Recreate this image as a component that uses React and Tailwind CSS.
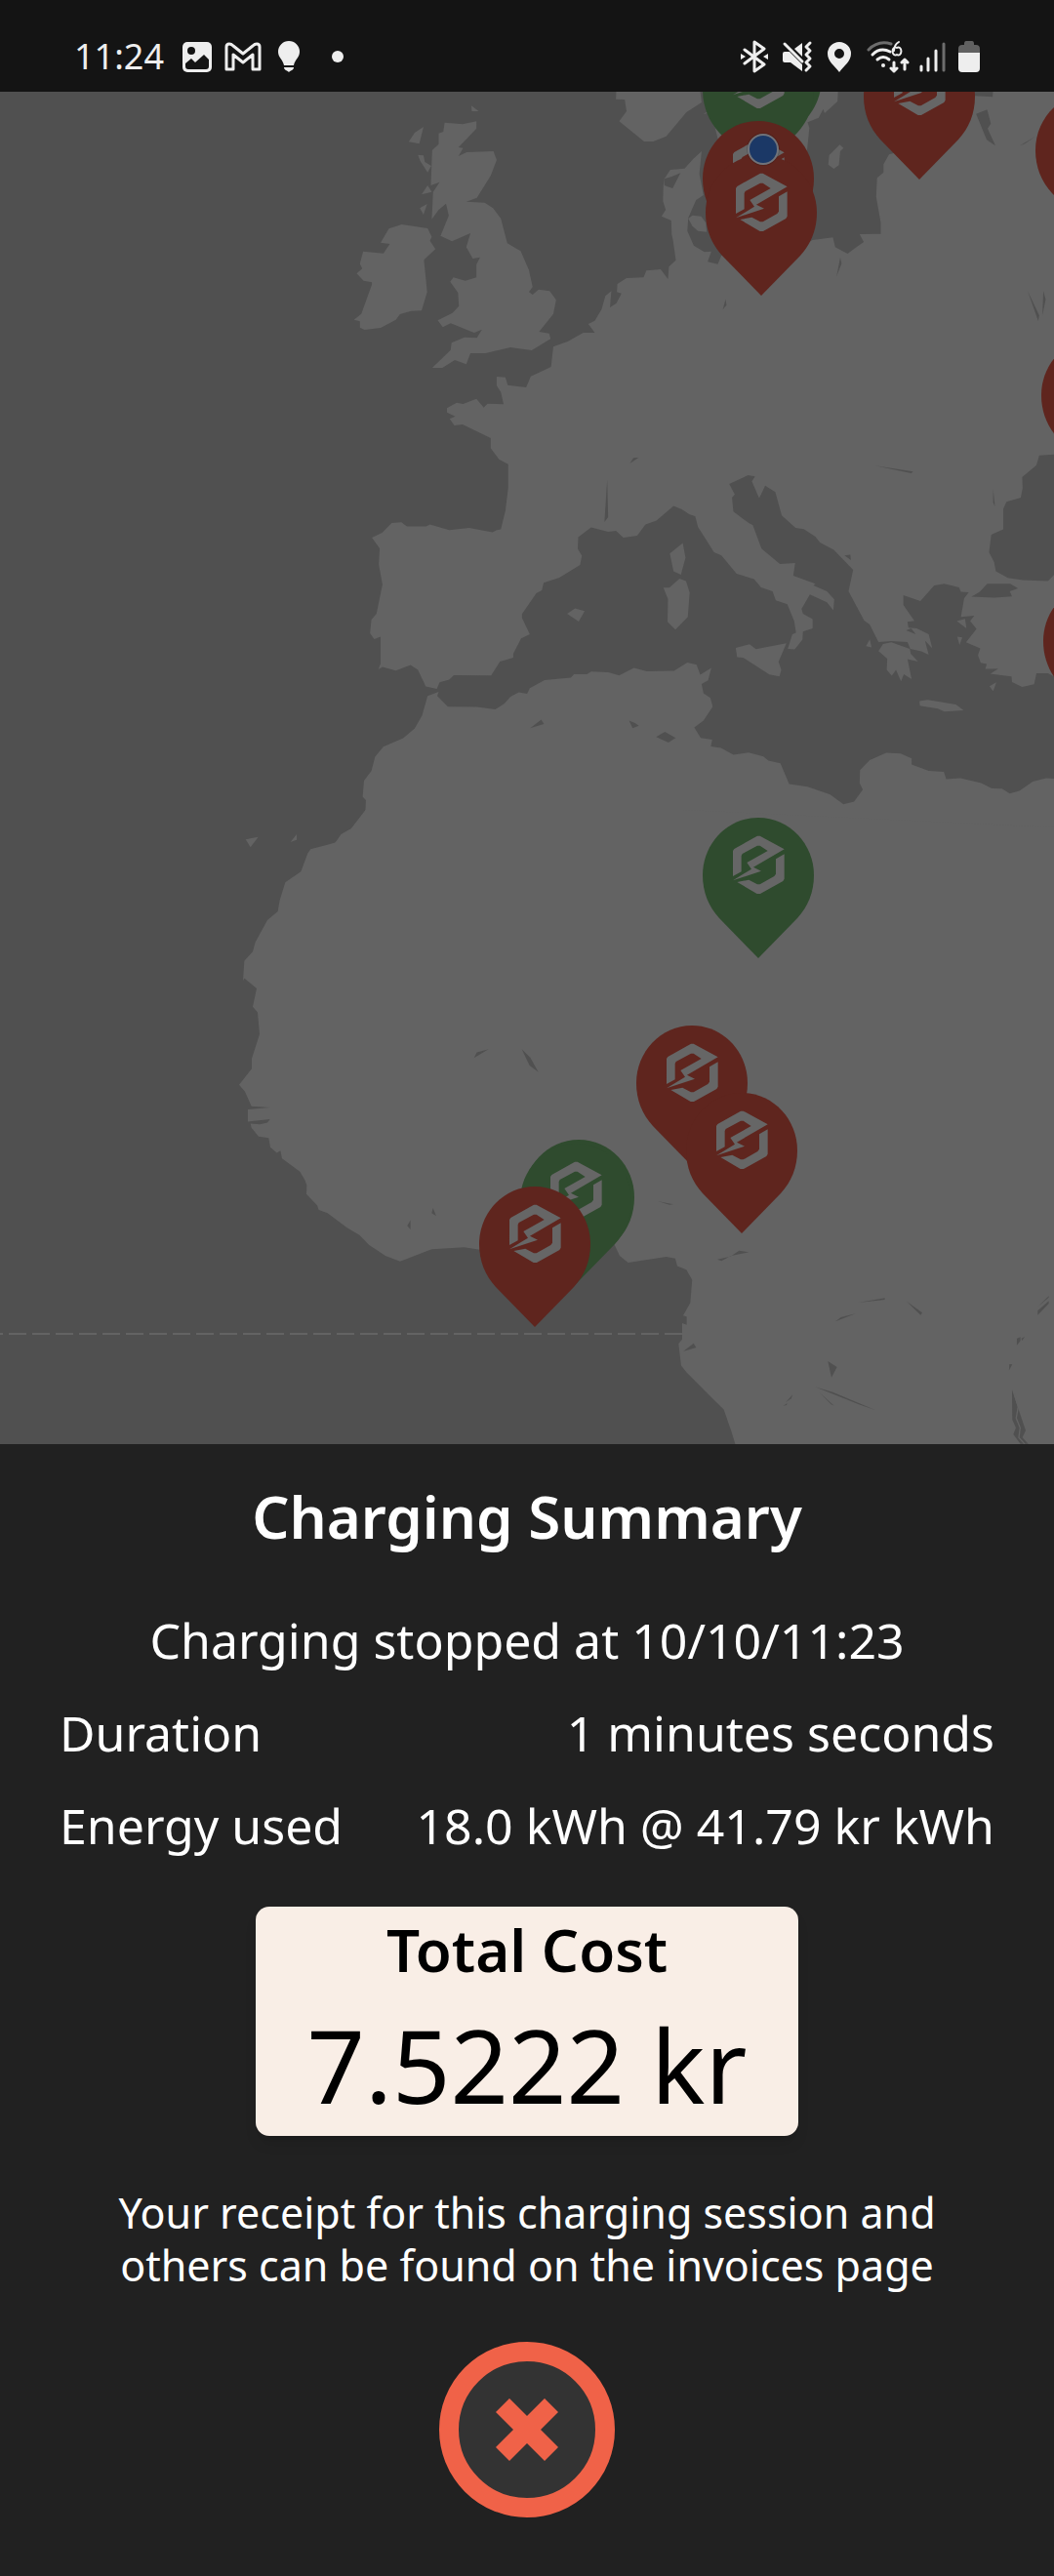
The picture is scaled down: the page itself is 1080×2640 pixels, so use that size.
import React from "react";

const SEA = "#505050";
const LAND = "#636363";
const RED = "#5f251e";
const GREEN = "#2f4b2e";

/* Land masses of Europe and the Mediterranean islands */
const europe = [
  // mainland
  "803,195 785,218 766,248 735,252 722,280 720,300 719,348 725,375 716,395 737,408 738,450 741,470 747,530 732,550 730,588 714,558 683,562 677,583 640,585 620,603 619,628 629,632 618,662 604,675 607,625 594,640 586,680 571,716 557,726 571,753 546,753 512,780 481,796 476,858 432,887 422,921 382,914 377,890 358,888 358,916 367,935 373,973 338,971 330,983 314,956 285,972 271,968 250,985 250,998 268,1010 256,1018 266,1038 284,1035 345,1077 345,1108 363,1142 383,1157 383,1230 377,1300 367,1358 358,1360 349,1367 298,1353 255,1360 213,1343 205,1349 163,1349 151,1336 130,1338 109,1368 87,1383 104,1416 102,1466 110,1527 97,1617 86,1635 83,1677 92,1695 106,1688 106,1770 101,1788 110,1781 139,1792 171,1775 187,1790 204,1841 228,1848 234,1828 255,1820 265,1806 346,1807 365,1764 394,1752 394,1740 411,1693 430,1680 422,1657 413,1630 413,1618 444,1554 456,1545 460,1522 494,1506 539,1467 543,1439 534,1418 535,1382 563,1352 600,1365 617,1362 633,1383 663,1377 681,1343 705,1331 742,1286 760,1296 777,1312 789,1317 795,1350 830,1428 846,1438 879,1494 917,1511 932,1536 957,1548 964,1576 989,1588 1004,1640 1008,1676 1000,1680 990,1725 1005,1727 1022,1697 1023,1672 1044,1662 1044,1634 1023,1617 1020,1602 1038,1558 1075,1582 1089,1607 1091,1573 1075,1548 1046,1530 1050,1525 1002,1500 1006,1461 973,1464 933,1417 914,1344 907,1340 872,1303 869,1260 875,1250 863,1218 904,1191 919,1195 912,1210 928,1262 941,1223 963,1243 977,1315 1007,1353 1025,1357 1050,1380 1060,1398 1090,1421 1132,1482 1122,1548 1156,1638 1168,1650 1187,1704 1215,1701 1250,1704 1256,1725 1280,1733 1296,1743 1288,1700 1304,1724 1296,1680 1270,1662 1252,1660 1250,1642 1265,1639 1241,1590 1241,1560 1278,1578 1308,1530 1330,1525 1362,1536 1366,1550 1383,1551 1373,1570 1366,1627 1395,1623 1386,1640 1400,1664 1377,1705 1408,1724 1403,1745 1409,1768 1422,1772 1419,1787 1447,1786 1430,1802 1476,1810 1477,1827 1499,1842 1525,1834 1530,1800 1555,1800 1568,1810 1600,1810 1600,-10 1436,-10 1435,28 1396,25 1300,100 1222,200 1210,205 1198,235 1198,260 1184,277 1182,335 1192,415 1192,449 1146,450 1155,474 1134,495 1120,510 1093,490 1088,460 1044,468 1000,500 846,515 838,542 816,535 824,503 809,505 786,485 772,440 774,400 791,345 807,330 798,265",
  // Scandinavia
  "618,-10 617,35 636,36 640,72 624,103 678,165 698,165 726,149 770,75 803,45 798,-10",
  "806,82 830,60 830,-10 1100,-10 1098,42 1070,78 1067,65 1057,92 1033,106 1037,124 1032,190 1000,300 850,250 838,155 832,122 815,78",
  "1103,175 1111,185 1104,195 1101,238 1090,249 1078,236 1080,207",
  "774,402 783,392 802,395 812,415 814,443 795,440 783,425",
  // Great Britain
  "245,107 284,112 314,103 314,125 275,183 285,185 275,210 293,198 351,195 358,222 345,270 315,338 292,350 332,353 350,370 367,402 381,478 410,502 428,560 436,612 428,628 436,636 449,620 473,625 487,652 481,695 450,750 472,755 475,772 434,807 388,798 334,816 301,816 292,850 267,837 240,861 218,861 258,806 260,784 288,767 315,769 326,743 309,753 258,724 241,736 230,715 262,692 276,671 274,630 257,596 264,583 290,593 314,583 314,543 322,521 306,525 292,490 301,447 261,472 236,455 254,393 248,356 232,375 217,404 220,320 234,290 215,300 218,192 232,173 232,140 242,135",
  // Ireland
  "152,420 208,432 217,458 213,470 225,496 200,529 207,628 195,685 172,686 148,696 139,713 106,738 71,744 61,737 61,718 48,713 64,695 87,605 87,598 69,593 54,571 66,556 61,541 68,503 112,509 126,480 106,476 124,433",
  // Scottish isles
  "199,120 190,172 167,166 180,138",
  "303,55 319,72 304,72",
  "187,206 199,208 202,228 216,240 208,260 192,225",
  "208,300 217,320 195,328",
  "207,357 199,390 191,370",
  // Corsica, Sardinia, Mallorca, Sicily
  "762,1400 768,1445 758,1497 742,1487 734,1432",
  "755,1509 769,1517 777,1552 773,1627 746,1666 729,1642 730,1572 720,1537 733,1537",
  "528,1601 549,1609 536,1641 511,1617",
  "877,1722 907,1711 921,1726 987,1708 970,1765 976,1790 972,1810 950,1804 893,1752 880,1751",
  // Greece, Crete and the Aegean
  "1197,1710 1215,1705 1255,1725 1257,1740 1273,1764 1250,1757 1259,1818 1242,1803 1236,1825 1225,1790 1216,1808 1205,1790 1206,1755 1187,1732",
  "1276,1886 1294,1882 1355,1896 1372,1914 1330,1918 1316,1909 1277,1900",
  "1443,1828 1436,1855 1428,1840",
  "1357,1640 1375,1633 1378,1662",
  "1358,1688 1369,1690 1363,1713",
  "1168,1696 1172,1721 1160,1717",
  // North Africa
  "232,1857 229,1870 252,1903 315,1904 355,1911 375,1893 388,1872 406,1859 424,1863 430,1846 462,1821 519,1814 526,1803 554,1803 563,1795 600,1797 624,1807 656,1784 684,1794 743,1793 772,1767 792,1774 800,1805 824,1784 817,1822 803,1833 807,1862 822,1876 827,1903 807,1946 787,1967 801,1999 826,2004 823,2025 845,2030 872,2051 905,2044 937,2056 948,2069 974,2077 993,2141 1033,2149 1082,2173 1111,2203 1134,2195 1153,2158 1146,2138 1147,2098 1168,2067 1204,2045 1235,2047 1259,2062 1259,2081 1296,2100 1329,2103 1334,2126 1365,2123 1410,2138 1433,2154 1455,2155 1472,2170 1493,2162 1522,2133 1551,2123 1600,2127 1600,2330 0,2325 8,2320 20,2295 42,2278 73,2222 74,2190 67,2180 70,2130 86,2100 94,2057 112,2026 155,2000 180,1970 196,1930 208,1870",
];

const europeWater = [
  // Black Sea and Marmara
  "1600,1127 1568,1127 1536,1130 1530,1160 1499,1197 1500,1230 1496,1260 1465,1273 1458,1295 1458,1358 1432,1374 1427,1428 1438,1458 1442,1487 1468,1507 1500,1514 1555,1517 1568,1498 1600,1498",
  "1389,1565 1407,1550 1423,1525 1473,1525 1490,1539 1472,1548 1477,1564 1440,1568",
  "1247,1668 1258,1662 1268,1680",
  "722,280 738,273 757,262 740,309 722,300",
  // lakes
  "849,682 855,650 857,668",
  "1104,522 1107,540 1096,580",
  "1511,625 1536,700 1534,717",
  "1545,625 1550,650 1543,700",
  "598,1205 600,1320 592,1335",
  "647,1155 655,1138 666,1137",
  "1180,1162 1262,1180 1258,1185",
  "1436,1235 1440,1287 1436,1275",
  "1399,80 1423,67 1431,110 1424,125 1441,178 1422,160",
  "1494,178 1527,150 1505,172",
  "1113,1438 1126,1436 1127,1452",
];

const africa = [
  "524,325 480,362 455,371 432,389 355,402 346,410 325,446 277,467 260,502 254,524 222,541 185,584 177,603 151,621 147,660 151,655 189,675 177,711 192,722 198,765 174,812 174,832 135,864 153,877 173,906 230,908 162,912 162,936 230,931 222,938 200,941 170,940 173,948 195,965 226,968 231,986 251,997 262,993 267,1008 322,1034 337,1050 343,1060 342,1078 375,1100 380,1109 407,1115 467,1144 505,1158 535,1178 585,1199 630,1210 727,1186 827,1182 875,1187 1230,1190 1288,1176 1305,1199 1331,1212 1448,1201 1476,1204 1482,1219 1510,1226 1528,1246 1522,1291 1500,1316 1511,1318 1511,1334 1497,1331 1497,1363 1486,1371 1494,1414 1510,1427 1590,1478 1625,1500 1648,1542 1660,1567 1660,1600 2660,1600 2660,360 1500,325",
  "155,383 194,378 170,398",
  "293,388 312,373 312,384",
];

const africaWater = [
  "1030,165 1064,148 1072,157",
  "1334,150 1352,155 1364,160 1345,165",
  "1417,182 1444,172 1477,184 1455,193",
  "857,811 866,800 902,794",
  "1004,794 1030,810 1055,839 1028,826",
  "652,1140 662,1129 662,1147",
  "727,1115 731,1105 741,1121",
  "1422,1092 1470,1098 1458,1099",
];

const congoWater = [
  "165,302 205,293 232,275 262,280 207,291 178,307",
  "60,585 92,560 100,573",
  "505,615 533,633 516,665",
  "528,493 545,480 590,469",
  "597,435 680,421 680,426",
  "747,431 795,466 790,473",
  "465,694 520,710 652,766 600,748",
  "478,710 524,752 515,748",
  "375,742 397,718 392,730",
  "368,752 380,744 378,750",
  "1150,460 1184,430 1184,438 1150,473",
  "1150,448 1184,415 1184,419",
  "1086,545 1097,541 1097,552 1086,566",
  "1100,545 1110,540 1102,552",
  "1062,643 1063,624 1072,625",
  "1071,703 1090,760 1113,828 1103,850 1121,869 1097,869 1075,840 1083,820 1072,795",
];

const pins = [
  { x: 728, y: 20, color: GREEN, plain: true },
  { x: 720, y: 33, color: GREEN },
  { x: 720, y: 124, color: RED },
  { x: 723, y: 159, color: RED },
  { x: 885, y: 40, color: RED },
  { x: 1061, y: 95, color: RED },
  { x: 1067, y: 346, color: RED },
  { x: 1069, y: 598, color: RED },
  { x: 720, y: 838, color: GREEN },
  { x: 652, y: 1051, color: RED },
  { x: 703, y: 1120, color: RED },
  { x: 536, y: 1168, color: GREEN, plain: true },
  { x: 533, y: 1172, color: GREEN },
  { x: 491, y: 1216, color: RED },
];

function Shapes({ list, fill }) {
  return list.map((points) => <polygon key={points} points={points} fill={fill} />);
}

function Pin({ x, y, color, plain }) {
  return (
    <g transform={`translate(${x} ${y})`}>
      <path d="M57 0C89 0 114 27 114 59C114 76 108 91 97 103L57 144L17 103C6 91 0 76 0 59C0 27 25 0 57 0Z" fill={color} />
      {!plain && (
        <g transform="scale(0.3333) translate(-70 -206)" fill="#666666">
          <polygon points="163,386 163,308 167,302 238,262 246,262 321,303 226,358 250,370 163,399 220,364 206,344 270,308 246,292 238,292 192,317 189,323 189,372" />
          <polygon points="321,318 321,394 317,401 247,440 237,440 176,404 212,397 238,411 246,411 290,386 295,379 295,333" />
        </g>
      )}
    </g>
  );
}

function MapView() {
  return (
    <svg
      role="img"
      aria-label="Map of charging stations"
      className="block h-full w-full"
      viewBox="0 94 1080 1386"
      preserveAspectRatio="xMidYMid slice"
    >
      <rect x="0" y="94" width="1080" height="1386" fill={SEA} />
      <path d="M-15 1367H699" stroke={LAND} strokeWidth="2" strokeDasharray="18 6" />
      <g transform="translate(340 90) scale(0.4719 0.3333)">
        <Shapes list={europe} fill={LAND} />
        <Shapes list={europeWater} fill={SEA} />
      </g>
      <g transform="translate(200 660) scale(0.3333 0.523)">
        <Shapes list={africa} fill={LAND} />
        <Shapes list={africaWater} fill={SEA} />
      </g>
      <g transform="translate(680 1190) scale(0.3333)">
        <Shapes list={congoWater} fill={SEA} />
        <path d="M1078 715L1090 755L1084 790L1096 820L1092 850L1110 870" fill="none" stroke={LAND} strokeWidth="4" />
      </g>
      {pins.map((pin) => (
        <Pin key={`${pin.x}-${pin.y}`} {...pin} />
      ))}
      <circle cx="782" cy="153" r="17" fill="#000000" fillOpacity="0.12" />
      <circle cx="782" cy="153" r="15" fill="#1b3866" stroke="#70737a" strokeWidth="2" />
    </svg>
  );
}

function StatusBar() {
  const ink = "#eeeeee";
  return (
    <header className="flex h-[94px] shrink-0 items-center justify-between bg-[#141414] pr-[76px] pl-[76px] pt-[22px] text-[#eeeeee]">
      <div className="flex items-center">
        <time className="w-[110px] text-[36px] leading-[40px]">11:24</time>
        <svg className="h-[32px] w-[32px]" viewBox="0 0 32 32" aria-label="Picture">
          <rect x="1" y="1" width="30" height="31" rx="5" fill={ink} />
          <circle cx="10" cy="10" r="4" fill="#141414" />
          <path d="M4 23L10 18L14 22L23 14L28 19V26Q28 29 25 29H7Q4 29 4 26Z" fill="#141414" />
        </svg>
        <svg className="ml-[12px] h-[32px] w-[38px]" viewBox="0 0 38 32" aria-label="Mail">
          <path d="M5 3Q7 3 9 5L19 13L29 5Q31 3 33 3Q36 3 36 6V29H29V14L19 22L9 14V29H2V6Q2 3 5 3Z" fill="none" stroke={ink} strokeWidth="3" strokeLinejoin="round" />
        </svg>
        <svg className="ml-[16px] h-[34px] w-[24px]" viewBox="0 0 24 34" aria-label="Tip">
          <path d="M12 1A11 11 0 0 1 23 12C23 18 18 20 17 26H7C6 20 1 18 1 12A11 11 0 0 1 12 1ZM7 28H17C17 31 14 31 12 33C10 31 7 31 7 28Z" fill={ink} />
        </svg>
        <span className="ml-[32px] h-[12px] w-[12px] rounded-full bg-[#eeeeee]" />
      </div>
      <div className="flex items-center">
        <svg className="h-[34px] w-[30px]" viewBox="0 0 30 34" aria-label="Bluetooth">
          <path d="M5 10L25 25L15 32V2L25 9L5 24" fill="none" stroke={ink} strokeWidth="3" strokeLinejoin="round" strokeLinecap="round" />
          <path d="M1 14L6 17L1 20ZM29 14L24 17L29 20Z" fill={ink} />
        </svg>
        <svg className="ml-[13px] h-[34px] w-[32px]" viewBox="0 0 32 34" aria-label="Muted, vibrate">
          <path d="M1 14Q1 12 3 12H8L21 25V32L9 23H3Q1 23 1 21ZM13 9L21 3V17Z" fill={ink} />
          <path d="M3 4L21 22" stroke={ink} strokeWidth="3" strokeLinecap="round" />
          <path d="M29 3L25 7L29 11L25 15L29 19L25 23L29 27L25 31" fill="none" stroke={ink} strokeWidth="3" strokeLinejoin="round" strokeLinecap="round" />
        </svg>
        <svg className="ml-[14px] h-[32px] w-[26px]" viewBox="0 0 26 32" aria-label="Location">
          <path fillRule="evenodd" d="M13 1A12 12 0 0 1 25 13C25 21 18 25 13 32C8 25 1 21 1 13A12 12 0 0 1 13 1ZM13 8A5 5 0 1 0 13 18A5 5 0 1 0 13 8Z" fill={ink} />
        </svg>
        <svg className="ml-[15px] h-[34px] w-[44px]" viewBox="0 0 44 34" aria-label="Wi-Fi 6">
          <path d="M2 10Q12 0 25 4" fill="none" stroke="#6d6d6d" strokeWidth="3" strokeLinecap="round" />
          <path d="M6 15Q14 7 24 12M11 20Q17 15 23 20" fill="none" stroke={ink} strokeWidth="3" strokeLinecap="round" />
          <circle cx="17" cy="26" r="2" fill={ink} />
          <path d="M33 2Q28 5 28 11M31 8A3 4 0 1 1 31 15A3 4 0 1 1 31 8" fill="none" stroke={ink} strokeWidth="2" strokeLinecap="round" />
          <path d="M28 23V32M25 29L28 32L31 29M39 30V20M36 23L39 20L42 23" fill="none" stroke={ink} strokeWidth="3" strokeLinecap="round" strokeLinejoin="round" />
        </svg>
        <svg className="ml-[9px] h-[34px] w-[28px]" viewBox="0 0 28 34" aria-label="Signal">
          <path d="M3 27V31M10 19V31M18 11V31" stroke={ink} strokeWidth="3" strokeLinecap="round" />
          <path d="M26 4V31" stroke="#6d6d6d" strokeWidth="3" strokeLinecap="round" />
        </svg>
        <svg className="ml-[13px] h-[34px] w-[22px]" viewBox="0 0 22 34" aria-label="Battery">
          <path d="M6 4Q6 1 8 1H14Q16 1 16 4V5H18Q22 5 22 9V14H0V9Q0 5 4 5H6Z" fill="#616161" />
          <path d="M0 13H22V29Q22 33 18 33H4Q0 33 0 29Z" fill={ink} />
        </svg>
      </div>
    </header>
  );
}

function Row({ label, value }) {
  return (
    <div className="flex justify-between">
      <dt>{label}</dt>
      <dd>{value}</dd>
    </div>
  );
}

export default function App() {
  return (
    <div className="flex min-h-screen flex-col bg-[#212121] font-['Noto_Sans',sans-serif] text-white">
      <StatusBar />
      <main className="flex flex-1 flex-col">
        <div className="relative min-h-[400px] flex-1">
          <div className="absolute inset-0">
            <MapView />
          </div>
        </div>
        <section className="flex flex-col items-center bg-[#212121] px-[61px] pt-[34px] pb-[60px] text-center">
          <h1 className="text-[60px] leading-[80px] font-semibold">Charging Summary</h1>
          <p className="mt-[55px] text-[50px] leading-[64px]">Charging stopped at 10/10/11:23</p>
          <dl className="mt-[31px] flex flex-col gap-[31px] self-stretch text-[50px] leading-[64px]">
            <Row label="Duration" value="1 minutes seconds" />
            <Row label="Energy used" value="18.0 kWh @ 41.79 kr kWh" />
          </dl>
          <div className="mt-[51px] rounded-[14px] bg-[#f9eee6] px-[53px] pt-[4px] pb-[13px] text-black shadow-lg">
            <h2 className="text-[60px] leading-[80px] font-semibold">Total Cost</h2>
            <p className="mt-[18px] text-[104px] leading-[120px]">7.5222 kr</p>
          </div>
          <p className="mt-[52px] max-w-[900px] text-[43px] leading-[54px]">
            Your receipt for this charging session and others can be found on the invoices page
          </p>
          <button
            type="button"
            aria-label="Close"
            className="mt-[51px] flex h-[180px] w-[180px] items-center justify-center rounded-full border-[20px] border-[#f06248] bg-[#333333]"
          >
            <svg className="h-[64px] w-[64px]" viewBox="0 0 64 64" aria-hidden="true">
              <path d="M14 0L32 18L50 0L64 14L46 32L64 50L50 64L32 46L14 64L0 50L18 32L0 14Z" fill="#f06248" />
            </svg>
          </button>
        </section>
      </main>
    </div>
  );
}
